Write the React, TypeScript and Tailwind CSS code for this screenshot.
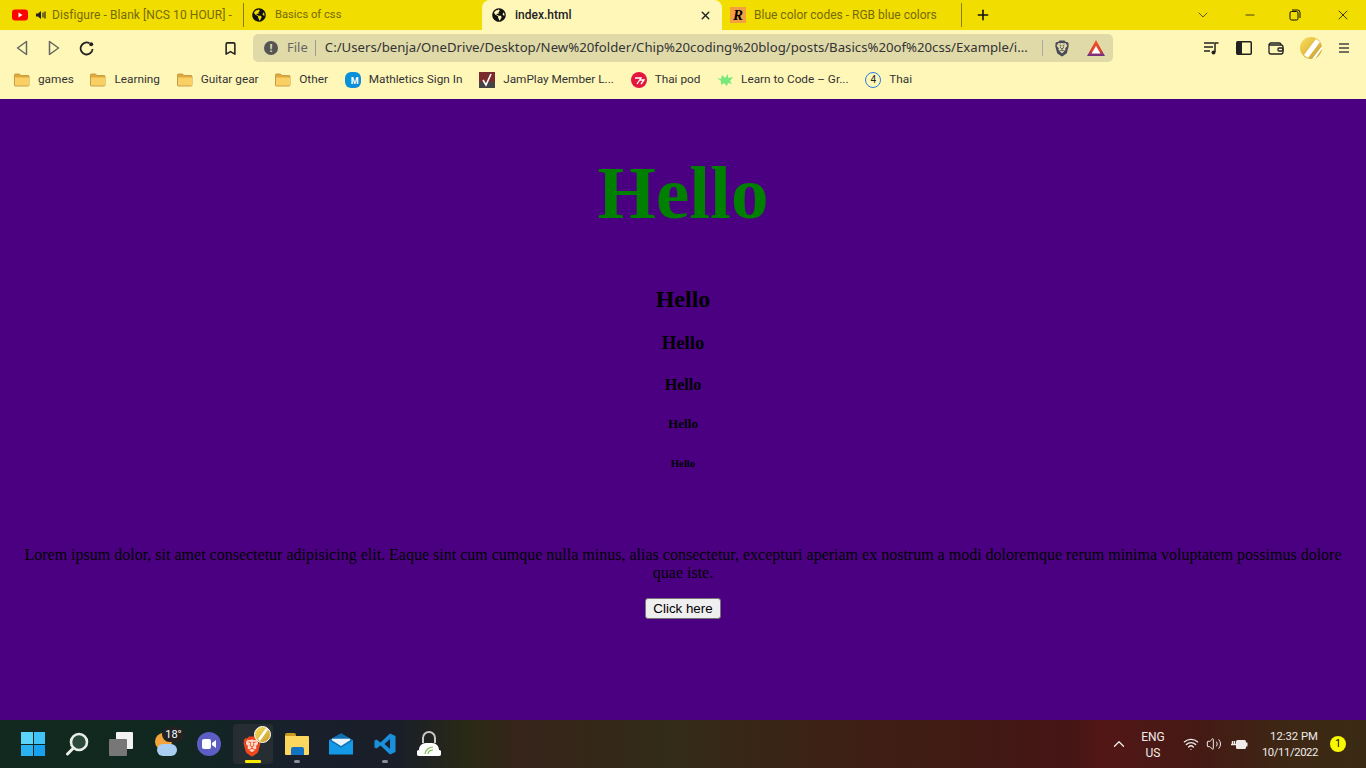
import React from 'react';
import { X, Minus, Plus, ChevronDown, ChevronUp, Bookmark, Wifi, Volume2 } from 'lucide-react';
import { FaGlobeAmericas } from 'react-icons/fa';
import { SiBrave } from 'react-icons/si';

const Globe = () => <FaGlobeAmericas className="w-[14px] h-[14px] text-[#111] shrink-0" />;

const Folder = () => (
  <svg width="16" height="14" viewBox="0 0 16 14" className="shrink-0">
    <path d="M0.500 2a1 1 0 0 1 1-1h4l1.500 1.500h7a1 1 0 0 1 1 1V12a1 1 0 0 1-1 1h-12.500a1 1 0 0 1-1-1z" fill="#e0aa3c" stroke="#b98f3a" strokeWidth="0.800" />
    <path d="M1 4.500h14V12a.5.5 0 0 1-.5.5h-13A.5.5 0 0 1 1 12z" fill="#fad065" />
  </svg>
);

const Tab = ({ icon, title, className, titleClass = '' }: { icon: React.ReactNode; title: string; className: string; titleClass?: string }) => (
  <div className={`flex items-center h-[30px] overflow-hidden whitespace-nowrap text-[12px] text-[#756a08] ${className}`}>
    {icon}
    <span className={titleClass}>{title}</span>
  </div>
);

const TabDivider = () => <div className="w-px h-[24px] bg-[#8a7d10] shrink-0" />;

const BookmarkItem = ({ icon, label }: { icon: React.ReactNode; label: string }) => (
  <div className="flex items-center gap-[8px] whitespace-nowrap text-[11.800px] text-[#333]">
    {icon}
    <span>{label}</span>
  </div>
);

export default function App() {
  return (
    <div className="w-[1366px] h-[768px] flex flex-col overflow-hidden bg-[#4b0082] font-['Roboto',sans-serif]">
      {/* tab strip */}
      <div className="h-[30px] bg-[#f2dd00] flex items-center shrink-0">
        <Tab
          className="w-[243px] pl-[12px]"
          titleClass="tracking-[0.08px]"
          icon={
            <div className="flex items-center mr-[5px] shrink-0">
              <svg width="16" height="12" viewBox="0 0 16 12">
                <rect width="16" height="11" y="0.500" rx="3" fill="#f00" />
                <path d="M6.500 3.500v5l4-2.500z" fill="#fff" />
              </svg>
              <svg width="12" height="12" viewBox="0 0 12 12" className="ml-[7px]">
                <path d="M1 4.500h2l3-2.500v8l-3-2.500H1z" fill="#222" />
                <path d="M8 3.500v5M10 2.500v7" stroke="#222" strokeWidth="1.200" />
              </svg>
            </div>
          }
          title="Disfigure - Blank [NCS 10 HOUR] -"
        />
        <TabDivider />
        <Tab className="w-[238px] pl-[8px] gap-[9px]" titleClass="text-[11.200px]" icon={<Globe />} title="Basics of css" />
        <div className="w-[240px] h-[30px] bg-[#fff7b8] rounded-t-[8px] flex items-center pl-[10px] pr-[10px] gap-[9px] text-[12px] font-medium text-[#222] shrink-0">
          <Globe />
          <span className="flex-1">index.html</span>
          <X className="w-[13px] h-[13px] text-[#222]" strokeWidth={2.500} />
        </div>
        <Tab
          className="w-[239px] pl-[8px] gap-[8px]"
          icon={
            <div className="w-[16px] h-[16px] bg-[#f4a040] flex items-center justify-center text-[15px] leading-none font-bold italic text-black font-['Liberation_Serif',serif] shrink-0">R</div>
          }
          title="Blue color codes - RGB blue colors"
        />
        <TabDivider />
        <Plus className="w-[16px] h-[16px] ml-[13px] text-[#111]" strokeWidth={2.400} />
        <div className="flex-1" />
        <ChevronDown className="w-[16px] h-[16px] text-[#333] mr-[32px]" strokeWidth={1.200} />
        <Minus className="w-[14px] h-[14px] text-[#111] mr-[32px]" strokeWidth={1.300} />
        <svg width="12" height="12" viewBox="0 0 12 12" className="mr-[34px]" fill="none" stroke="#111" strokeWidth="1">
          <rect x="1" y="2.500" width="8" height="8.500" rx="1.500" />
          <path d="M3 1h5.500A2.500 2.500 0 0 1 11 3.500V9" />
        </svg>
        <X className="w-[16px] h-[16px] text-[#111] mr-[15px]" strokeWidth={1.200} />
      </div>

      {/* toolbar */}
      <div className="h-[36px] bg-[#fff7b8] flex items-center shrink-0 pl-[16px]">
        <svg width="12" height="16" viewBox="0 0 12 16" fill="none" stroke="#666" strokeWidth="1.500" className="mr-[20px]">
          <path d="M10.500 1.500v13L1.500 8z" strokeLinejoin="round" />
        </svg>
        <svg width="12" height="16" viewBox="0 0 12 16" fill="none" stroke="#666" strokeWidth="1.500" className="mr-[19px]">
          <path d="M1.500 1.500v13l9-6.500z" strokeLinejoin="round" />
        </svg>
        <svg width="15" height="15" viewBox="0 0 15 15" fill="none" stroke="#222" strokeWidth="1.800" className="mr-[129px]">
          <path d="M10.500 2.200A6 6 0 1 0 13.600 8" />
          <circle cx="12.200" cy="3.200" r="2" fill="#222" stroke="none" />
        </svg>
        <Bookmark className="w-[15px] h-[15px] text-[#222] mr-[15px]" strokeWidth={2.500} />
        <div className="w-[860px] h-[28px] rounded-[5px] bg-[#e0daa8] flex items-center pl-[11px] text-[13.200px] font-['Noto_Sans',sans-serif] text-[#333] whitespace-nowrap">
          <div className="w-[14px] h-[14px] rounded-full bg-[#555] text-[#e0daa8] text-[11px] leading-[14px] font-bold text-center shrink-0">!</div>
          <span className="ml-[9px] text-[#666] text-[13px]">File</span>
          <div className="w-px h-[16px] bg-[#999] ml-[7px] mr-[9px]" />
          <span className="w-[706px] overflow-hidden">C:/Users/benja/OneDrive/Desktop/New%20folder/Chip%20coding%20blog/posts/Basics%20of%20css/Example/i...</span>
          <div className="w-px h-[16px] bg-[#aaa] ml-[11px] mr-[11px]" />
          <SiBrave className="w-[16px] h-[17px] text-[#4a4a58] mr-[17px]" />
          <svg width="18" height="16" viewBox="0 0 18 16">
            <defs>
              <linearGradient id="bat" x1="0" y1="0" x2="0" y2="1">
                <stop offset="0" stopColor="#f15a29" />
                <stop offset="0.650" stopColor="#e0402a" />
                <stop offset="1" stopColor="#662d91" />
              </linearGradient>
            </defs>
            <path d="M9 0l9 16H0z" fill="url(#bat)" />
            <path d="M9 6l4.500 7.500h-9z" fill="#fff" />
          </svg>
        </div>
        <div className="flex-1" />
        <div className="flex items-center pr-[16px] gap-[16px]">
          <svg width="16" height="14" viewBox="0 0 16 14" fill="none" stroke="#222" strokeWidth="1.500">
            <path d="M0 2h10M0 6h9M0 10h6M14.500 2H11v9" />
            <circle cx="9.500" cy="11.500" r="2" fill="#222" stroke="none" />
          </svg>
          <svg width="16" height="14" viewBox="0 0 16 14">
            <rect x="0.750" y="0.750" width="14.500" height="12.500" rx="1" fill="none" stroke="#222" strokeWidth="1.500" />
            <rect x="1" y="1" width="5" height="12" fill="#222" />
          </svg>
          <svg width="16" height="14" viewBox="0 0 16 14" fill="none" stroke="#222" strokeWidth="1.300">
            <path d="M1 4a2 2 0 0 1 2-2h8a2 2 0 0 1 2 2M1 4v7a2 2 0 0 0 2 2h10a2 2 0 0 0 2-2V6a2 2 0 0 0-2-2z" />
            <rect x="10" y="7" width="5" height="3" rx="1" />
          </svg>
          <svg width="22" height="22" viewBox="0 0 22 22">
            <defs>
              <linearGradient id="coin" x1="0" y1="0" x2="1" y2="1">
                <stop offset="0" stopColor="#fde05a" />
                <stop offset="1" stopColor="#c49c2c" />
              </linearGradient>
              <clipPath id="avatar">
                <circle cx="11" cy="11" r="11" />
              </clipPath>
            </defs>
            <g clipPath="url(#avatar)">
              <rect width="22" height="22" fill="url(#coin)" />
              <path d="M4 18L16 2l4 3L8 21z" fill="#fff" />
              <path d="M12 22L22 9v3l-7 10z" fill="#fff" />
            </g>
          </svg>
          <svg width="12" height="12" viewBox="0 0 12 12" stroke="#444" strokeWidth="1.600">
            <path d="M1 2h10M1 6h10M1 10h10" />
          </svg>
        </div>
      </div>

      {/* bookmarks */}
      <div className="h-[33px] bg-[#fff7b8] flex items-center shrink-0 pl-[14px] pb-[5px] gap-[16.700px]">
        <BookmarkItem icon={<Folder />} label="games" />
        <BookmarkItem icon={<Folder />} label="Learning" />
        <BookmarkItem icon={<Folder />} label="Guitar gear" />
        <BookmarkItem icon={<Folder />} label="Other" />
        <BookmarkItem
          icon={
            <div className="w-[16px] h-[16px] rounded-[6px] bg-[#0b8fd8] text-white text-[9px] leading-[18px] text-right pr-[2px] font-bold shrink-0">M</div>
          }
          label="Mathletics Sign In"
        />
        <BookmarkItem
          icon={
            <svg width="16" height="16" viewBox="0 0 16 16" className="shrink-0">
              <rect width="16" height="16" fill="#7a2b2b" />
              <rect y="10" width="16" height="6" fill="#444" />
              <path d="M4 8l3 5 5-11" stroke="#fff" strokeWidth="1.600" fill="none" />
            </svg>
          }
          label="JamPlay Member L..."
        />
        <BookmarkItem
          icon={
            <svg width="16" height="16" viewBox="0 0 16 16" className="shrink-0">
              <circle cx="8" cy="8" r="8" fill="#e3173e" />
              <path d="M4 6h6l-4 6M9 8h4l-3 4" stroke="#fff" strokeWidth="1.300" fill="none" />
            </svg>
          }
          label="Thai pod"
        />
        <BookmarkItem
          icon={
            <svg width="16" height="13" viewBox="0 0 16 13" className="shrink-0">
              <path d="M0 4l4 1 1-4 3 3 3-4v4l5-1-3 4 2 3-4-1-1 3-3-3-3 2 0-4z" fill="#77e87a" />
            </svg>
          }
          label="Learn to Code – Gr..."
        />
        <BookmarkItem
          icon={
            <div className="w-[16px] h-[16px] rounded-full border border-[#2b7de0] text-[#222] text-[10px] leading-[14px] text-center shrink-0">4</div>
          }
          label="Thai"
        />
      </div>

      {/* page */}
      <main className="flex-1 bg-[#4b0082] text-center text-black font-['Liberation_Serif',serif] flex flex-col items-center">
        <h1 className="text-[75px] leading-[86px] font-bold text-[#008000] mt-[51px]">Hello</h1>
        <h2 className="text-[24px] leading-[27px] font-bold mt-[50px]">Hello</h2>
        <h3 className="text-[18.720px] leading-[21px] font-bold mt-[19px]">Hello</h3>
        <h4 className="text-[16px] leading-[18px] font-bold mt-[23px]">Hello</h4>
        <h5 className="text-[13.280px] leading-[15px] font-bold mt-[22px]">Hello</h5>
        <h6 className="text-[10.720px] leading-[12px] font-bold mt-[26px]">Hello</h6>
        <p className="text-[16px] leading-[18px] mt-[77px] px-[8px]">
          Lorem ipsum dolor, sit amet consectetur adipisicing elit. Eaque sint cum cumque nulla minus, alias consectetur, excepturi aperiam ex nostrum a modi doloremque rerum minima voluptatem possimus dolore quae iste.
        </p>
        <button className="mt-[16px] w-[76px] h-[21px] bg-[#efefef] border border-[#767676] rounded-[3px] text-[13.333px] leading-[19px] text-black font-['Liberation_Sans',sans-serif]">
          Click here
        </button>
      </main>

      {/* taskbar */}
      <div className="h-[48px] shrink-0 bg-[linear-gradient(90deg,#12291f_0,#10281f_150px,#18202c_300px,#1a1e28_400px,#2a2a14_470px,#36241a_520px,#332c18_670px,#3d2014_840px,#451515_1070px,#521616_1100px,#451a14_1200px,#3d2814_1290px,#3a2a14_1366px)] flex items-center text-white">
        <div className="flex items-center pl-[21px] gap-[20px]">
          <div className="grid grid-cols-2 gap-[1px] w-[24px] h-[24px]">
            <div className="bg-[#5cd5fb]" />
            <div className="bg-[#42c3f7]" />
            <div className="bg-[#2bb2f3]" />
            <div className="bg-[#17a1ee]" />
          </div>
          <svg width="24" height="24" viewBox="0 0 24 24" fill="none" stroke="#e8efe8" strokeWidth="2.600">
            <circle cx="14" cy="10" r="8" fill="#2c4a3c" />
            <path d="M8.500 16L2.500 22" strokeLinecap="round" strokeWidth="3" />
          </svg>
          <div className="relative w-[24px] h-[24px]">
            <div className="absolute right-0 top-0 w-[17px] h-[17px] bg-[#f2f2f2] rounded-[1px]" />
            <div className="absolute left-0 bottom-0 w-[18px] h-[17px] bg-[#777] rounded-[1px]" />
          </div>
          <div className="relative w-[24px] h-[24px]">
            <div className="absolute left-[2px] top-[1px] w-[17px] h-[17px] rounded-full bg-[#f2a33a]" />
            <div className="absolute left-[4px] bottom-0 w-[20px] h-[12px] rounded-full bg-[#a9cdf0]" />
            <div className="absolute -top-[5px] left-[9px] w-[23px] h-[15px] rounded-full bg-[#222] text-white text-[11px] leading-[15px] text-center">18°</div>
          </div>
          <div className="w-[24px] h-[24px] rounded-full bg-[#5c5ec4] flex items-center justify-center">
            <svg width="14" height="10" viewBox="0 0 14 10" fill="#fff">
              <rect width="9" height="10" rx="2" />
              <path d="M10 4l4-3v8l-4-3z" />
            </svg>
          </div>
          <div className="relative w-[40px] h-[40px] rounded-[4px] bg-[#262d33] flex items-center justify-center -mx-[8px]">
            <div className="absolute left-[13px] top-[15px] w-[12px] h-[13px] bg-[#ffd9c8] rounded-b-full" />
            <SiBrave className="relative w-[20px] h-[23px] text-[#f1471d] -translate-x-[1px] translate-y-[2px]" />
            <svg width="17" height="17" viewBox="0 0 17 17" className="absolute top-[2px] right-[2px]">
              <circle cx="8.500" cy="8.500" r="8" fill="url(#coin)" stroke="#fff" strokeWidth="1" />
              <path d="M4 13L12 2l2 1.500L6 15z" fill="#fff" />
            </svg>
            <div className="absolute bottom-[1px] left-[12px] w-[16px] h-[3px] rounded-[1px] bg-[#f5ea00]" />
          </div>
          <div className="relative w-[24px] h-[22px]">
            <div className="absolute left-0 top-0 w-[11px] h-[6px] bg-[#c99a1d] rounded-t-[2px]" />
            <div className="absolute left-0 top-[3px] right-0 bottom-0 bg-[#fcd75f] rounded-[1px]" />
            <div className="absolute left-[6px] bottom-0 w-[13px] h-[8px] bg-[#1272c4] rounded-t-[2px]" />
            <div className="absolute -bottom-[8px] left-[9px] w-[6px] h-[3px] rounded-full bg-[#8a8f94]" />
          </div>
          <svg width="24" height="22" viewBox="0 0 25 22">
            <path d="M12.500 0L25 7v15H0V7z" fill="#1499e6" />
            <path d="M0 7l12.500 8L25 7v0L12.500 0z" fill="#0e6fb5" />
            <path d="M3 5.500h19V7l-9.500 6L3 7z" fill="#e9f3fb" />
          </svg>
          <div className="relative w-[24px] h-[24px]">
            <svg width="24" height="24" viewBox="0 0 24 24">
              <path d="M17 1.500L22.500 4v16L17 22.500 7.500 13.500 3.500 16.500 1.500 15.500v-7L3.500 7.500l4 3zM17 7l-5.500 5 5.500 5z" fill="#1a8fdc" fillRule="evenodd" />
            </svg>
            <div className="absolute -bottom-[7px] left-[9px] w-[6px] h-[3px] rounded-full bg-[#8a8f94]" />
          </div>
          <svg width="24" height="26" viewBox="0 0 24 26">
            <path d="M6 12V7a6 6 0 0 1 12 0v5" fill="none" stroke="#c8c8c8" strokeWidth="2" />
            <path d="M3 25a3 3 0 0 1-1-6c0-4 3-7 7-7h6c4 0 7 3 7 7a3 3 0 0 1-1 6z" fill="#fff" />
            <path d="M8 23a8 8 0 0 1 8-7M11 23a5 5 0 0 1 5-4" fill="none" stroke="#79b84a" strokeWidth="1.200" />
          </svg>
        </div>
        <div className="flex-1" />
        <div className="flex items-center pr-[20px] text-[#f0ecea]">
          <ChevronUp className="w-[18px] h-[18px] mr-[12px]" strokeWidth={1.700} />
          <div className="text-[12px] leading-[16px] text-center w-[26px] mr-[17px] mt-[2px]">
            <div>ENG</div>
            <div>US</div>
          </div>
          <Wifi className="w-[16px] h-[16px] mr-[7px]" strokeWidth={2} />
          <Volume2 className="w-[16px] h-[16px] mr-[9px]" strokeWidth={1.500} />
          <svg width="17" height="12" viewBox="0 0 17 12" className="mr-[8px]">
            <rect x="5" y="2" width="10" height="9" rx="1.500" fill="#f0ecea" />
            <rect x="15" y="4.500" width="1.500" height="4" fill="#f0ecea" />
            <path d="M0 6.500h5M1.500 3v3.500M3.500 3v3.500" stroke="#f0ecea" strokeWidth="1.400" />
          </svg>
          <div className="text-[11.300px] leading-[16px] text-right w-[62px] mr-[12px] mt-[2px]">
            <div>12:32 PM</div>
            <div className="tracking-[-0.4px]">10/11/2022</div>
          </div>
          <div className="w-[16px] h-[16px] rounded-full bg-[#f8f800] text-black text-[10px] leading-[16px] text-center">1</div>
        </div>
      </div>
    </div>
  );
}
